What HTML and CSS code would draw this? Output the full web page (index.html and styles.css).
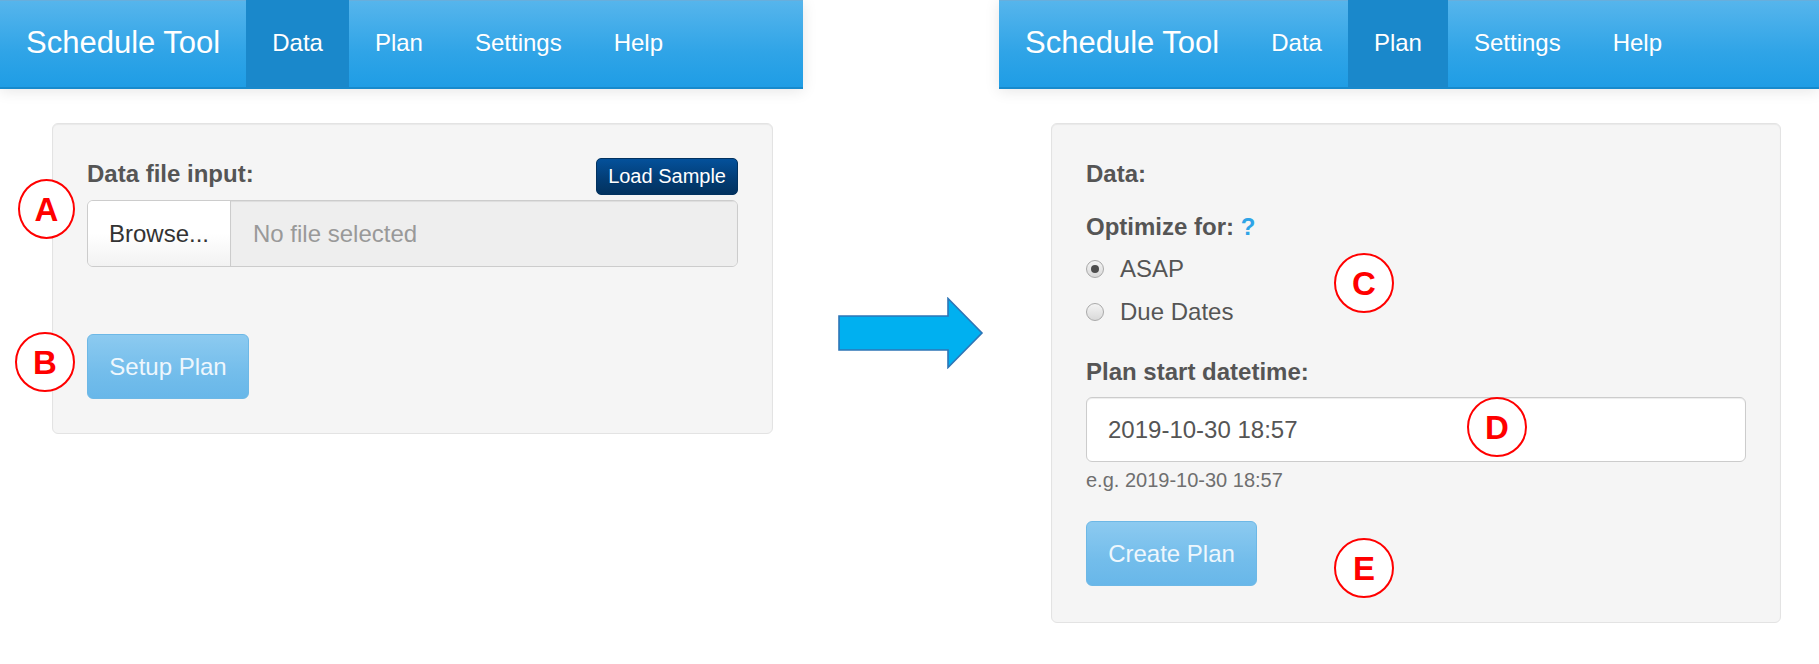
FILE: index.html
```html
<!DOCTYPE html>
<html lang="en">
<head>
<meta charset="utf-8">
<title>Schedule Tool</title>
<link rel="stylesheet" href="styles.css">
</head>
<body>
<div class="stage">
  <section class="shot shot-left">
    <nav class="navbar">
      <span class="brand">Schedule Tool</span>
      <ul class="nav">
        <li class="active">Data</li>
        <li>Plan</li>
        <li>Settings</li>
        <li>Help</li>
      </ul>
    </nav>
    <div class="well well-left">
      <div class="file-head">
        <label class="label">Data file input:</label>
        <button class="btn-sample">Load Sample</button>
      </div>
      <div class="file-input">
        <span class="browse">Browse...</span>
        <span class="file-name">No file selected</span>
      </div>
      <button class="btn-primary btn-setup">Setup Plan</button>
    </div>
    <span class="marker marker-a">A</span>
    <span class="marker marker-b">B</span>
  </section>

  <div class="arrow-col">
    <svg class="arrow" width="146" height="72" viewBox="0 0 146 72">
      <path d="M1 19 H110 V1.5 L144 36 L110 70.5 V53 H1 Z" fill="#00b0f0" stroke="#2e75b6" stroke-width="1.6" stroke-linejoin="miter"/>
    </svg>
  </div>

  <section class="shot shot-right">
    <nav class="navbar">
      <span class="brand">Schedule Tool</span>
      <ul class="nav">
        <li>Data</li>
        <li class="active">Plan</li>
        <li>Settings</li>
        <li>Help</li>
      </ul>
    </nav>
    <div class="well well-right">
      <div class="label label-data">Data:</div>
      <div class="label label-opt">Optimize for: <span class="help-q">?</span></div>
      <div class="radio radio-first"><span class="radio-dot checked"></span><span>ASAP</span></div>
      <div class="radio radio-second"><span class="radio-dot"></span><span>Due Dates</span></div>
      <div class="label label-start">Plan start datetime:</div>
      <div class="text-input">2019-10-30 18:57</div>
      <div class="help-block">e.g. 2019-10-30 18:57</div>
      <button class="btn-primary btn-create">Create Plan</button>
    </div>
    <span class="marker marker-c">C</span>
    <span class="marker marker-d">D</span>
    <span class="marker marker-e">E</span>
  </section>
</div>
</body>
</html>
```

FILE: styles.css
```css
* { box-sizing: border-box; }

body {
  margin: 0;
  background: #fff;
  font-family: "Liberation Sans", Arial, Helvetica, sans-serif;
  color: #555;
}

.stage {
  display: flex;
  width: 1819px;
  height: 664px;
  overflow: hidden;
}

.shot { position: relative; flex: none; }
.shot-left { width: 803px; }
.shot-right { width: 820px; }

.arrow-col {
  flex: none;
  width: 196px;
  padding: 297px 0 0 35px;
}
.arrow { display: block; }

/* navbar */
.navbar {
  display: flex;
  height: 89px;
  background: linear-gradient(#56b5ec, #2fa4e7 60%, #1f9de5);
  border-top: 1px solid #68aedc;
  border-bottom: 2px solid #178acc;
  box-shadow: 0 2px 14px rgba(0, 0, 0, 0.1);
}
.brand {
  display: flex;
  align-items: center;
  padding: 0 26px 2px 26px;
  font-size: 31px;
  color: #fff;
  text-shadow: 0 1px 0 rgba(0, 0, 0, 0.05);
}
.nav {
  display: flex;
  margin: 0 0 -1px 0;
  padding: 0;
  list-style: none;
}
.nav li {
  display: flex;
  align-items: center;
  padding: 0 26px 2px 26px;
  margin-top: -1px;
  font-size: 24px;
  color: #fff;
  text-shadow: 0 1px 0 rgba(0, 0, 0, 0.05);
}
.nav li.active { background: #1a88cb; }

/* well */
.well {
  margin: 34px 0 0 52px;
  padding: 34px;
  background: #f5f5f5;
  border: 1px solid #e3e3e3;
  border-radius: 6px;
  box-shadow: inset 0 1px 1px rgba(0, 0, 0, 0.05);
}
.well-left { width: 721px; }
.well-right { width: 730px; padding-bottom: 36px; }

.label {
  font-weight: bold;
  font-size: 24px;
  line-height: 34px;
  color: #555;
}

/* left */
.file-head {
  display: flex;
  justify-content: space-between;
  align-items: flex-start;
  height: 37px;
}
.file-head .label { margin-top: -1px; }

.btn-sample {
  height: 37px;
  padding: 0 11px;
  font-family: inherit;
  font-size: 20px;
  line-height: 35px;
  color: #fff;
  background: linear-gradient(#04519b, #033c73 60%, #02325f);
  border: 1px solid #02325f;
  border-radius: 5px;
  text-shadow: 0 1px 0 rgba(0, 0, 0, 0.1);
}

.file-input {
  display: flex;
  margin-top: 5px;
  height: 67px;
  border: 1px solid #ccc;
  border-radius: 6px;
  overflow: hidden;
}
.browse {
  flex: 0 0 143px;
  display: flex;
  align-items: center;
  justify-content: center;
  font-size: 24px;
  color: #333;
  background: linear-gradient(#fff, #fff 50%, #f2f2f2);
  border-right: 1px solid #ccc;
}
.file-name {
  flex: 1;
  display: flex;
  align-items: center;
  padding-left: 22px;
  font-size: 24px;
  color: #999;
  background: #eee;
  box-shadow: inset 0 1px 1px rgba(0, 0, 0, 0.075);
}

.btn-primary {
  display: flex;
  align-items: center;
  justify-content: center;
  height: 65px;
  font-family: inherit;
  font-size: 24px;
  color: #eef7fd;
  background: linear-gradient(#8ccaf0, #73bdeb 60%, #68b7e9);
  border: 1px solid #6db8e6;
  border-radius: 6px;
}
.btn-setup { margin-top: 67px; width: 162px; }
.btn-create { margin-top: 26px; width: 171px; }

/* right */
.label-data { margin-top: -1px; }
.label-opt { margin-top: 19px; }
.help-q { color: #2fa4e7; }

.radio {
  display: flex;
  align-items: center;
  gap: 16px;
  font-size: 24px;
  line-height: 34px;
  color: #555;
}
.radio-first { margin-top: 8px; }
.radio-second { margin-top: 9px; }

.radio-dot {
  position: relative;
  width: 18px;
  height: 18px;
  border-radius: 50%;
  border: 1px solid #a9a9a9;
  background: linear-gradient(#f4f4f4, #d9d9d9);
}
.radio-dot.checked::after {
  content: "";
  position: absolute;
  left: 4px;
  top: 4px;
  width: 8px;
  height: 8px;
  border-radius: 50%;
  background: #4d4d4d;
}

.label-start { margin-top: 26px; }

.text-input {
  display: flex;
  align-items: center;
  margin-top: 8px;
  height: 65px;
  padding-left: 21px;
  font-size: 24px;
  color: #555;
  background: #fff;
  border: 1px solid #ccc;
  border-radius: 6px;
  box-shadow: inset 0 1px 1px rgba(0, 0, 0, 0.075);
}

.help-block {
  margin-top: 4px;
  font-size: 20px;
  line-height: 29px;
  color: #6f6f6f;
}

/* annotation markers */
.marker {
  position: absolute;
  display: flex;
  align-items: center;
  justify-content: center;
  width: 60px;
  height: 60px;
  border: 2px solid #f00;
  border-radius: 50%;
  background: #fff;
  color: #f00;
  font-family: "Liberation Sans", Arial, sans-serif;
  font-weight: bold;
  font-size: 33px;
  line-height: 1;
}
.marker-a { left: 18px; top: 179px; width: 57px; }
.marker-b { left: 15px; top: 332px; }
.marker-c { left: 335px; top: 253px; }
.marker-d { left: 468px; top: 397px; }
.marker-e { left: 335px; top: 538px; }
```
